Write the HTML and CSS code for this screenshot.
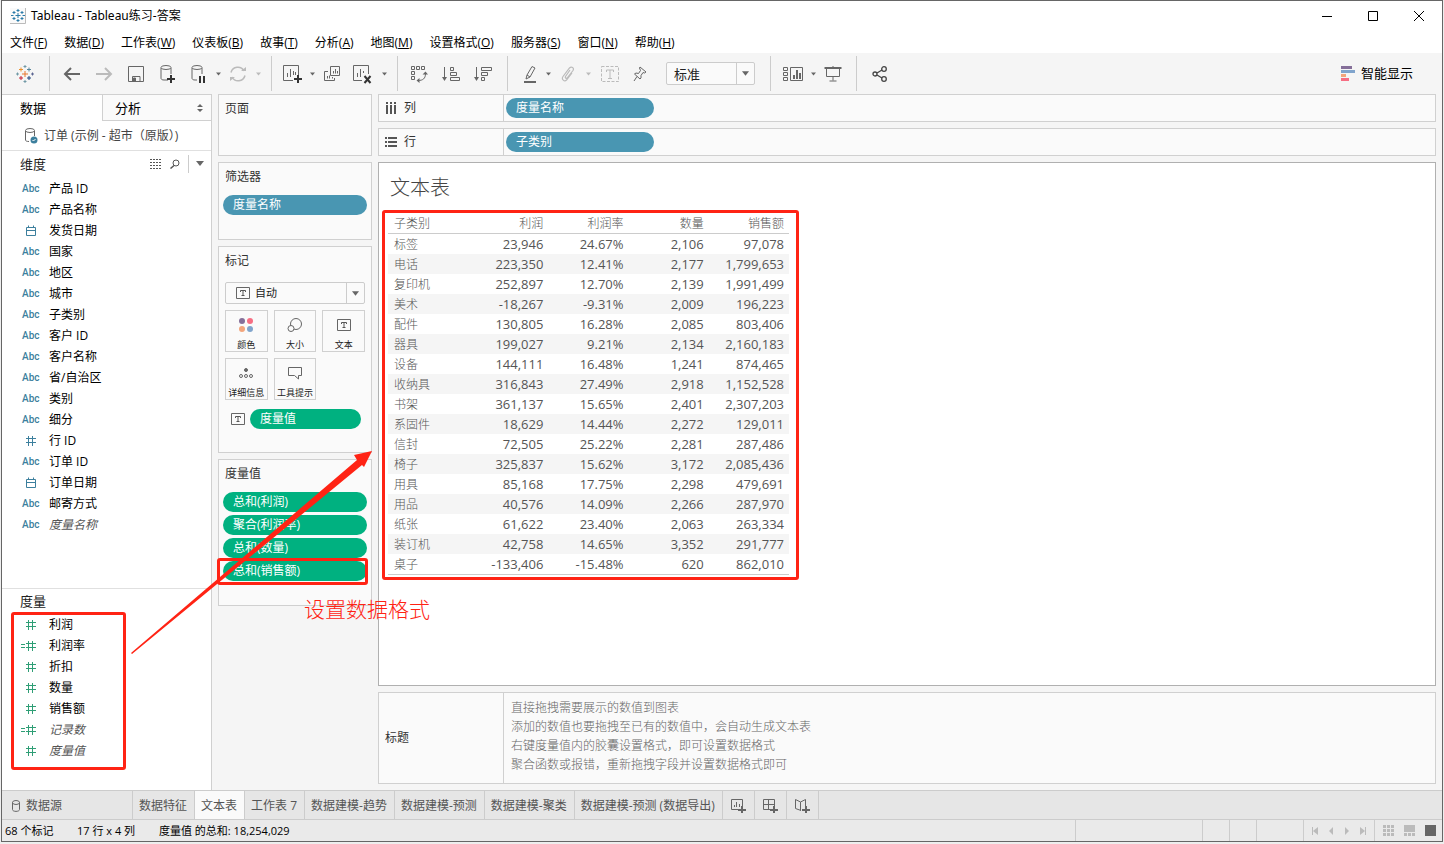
FILE: index.html
```html
<!DOCTYPE html>
<html lang="zh-CN">
<head>
<meta charset="utf-8">
<title>Tableau - Tableau练习-答案</title>
<link rel="stylesheet" href="styles.css">
</head>
<body>
<svg class="defs" aria-hidden="true">
  <symbol id="hash" viewBox="0 0 12 12"><path d="M3.500 1v10M7.500 1v10M1 3.500h10M1 7.500h10"/></symbol>
  <symbol id="eqhash" viewBox="0 0 16 12"><path d="M7.500 1v10M11.500 1v10M5 3.500h10M5 7.500h10M0 4.500h4M0 7.500h4"/></symbol>
  <symbol id="cal" viewBox="0 0 12 12"><path d="M1.500 2.500h9v8h-9zM1.500 5.500h9M3.500 .5v2M8.500 .5v2"/></symbol>
  <symbol id="caret" viewBox="0 0 8 5"><path d="M0 0h8L4 5z"/></symbol>
  <symbol id="tbox" viewBox="0 0 14 12"><path d="M.5.5h13v11H.5z" fill="none" stroke="#666"/><path d="M4.500 5V3.500h5V5M7 3.500v5.500M5.500 8.500h3" fill="none" stroke="#555"/></symbol>
</svg>
<div class="window">
  <header class="titlebar">
    <svg class="app-icon" width="16" height="16" viewBox="0 0 16 16"><path d="M0 0h15v15H0z" fill="#fafafa"/><path d="M15.500 0v15.500H0" fill="none" stroke="#bbb"/><path d="M5.500 7.500h5M8 5v5M8 1v3M6.500 2.500h3M8 11v3M6.500 12.500h3M2.500 4.500h3M4 3v3M10.500 4.500h3M12 3v3M2.500 10.500h3M4 9v3M10.500 10.500h3M12 9v3M1 7.500h2.500M12.500 7.500H15" fill="none" stroke="#2b7ba8"/></svg>
    <h1 class="app-title">Tableau - Tableau练习-答案</h1>
    <div class="win-controls">
      <button aria-label="最小化"><svg width="12" height="12"><path d="M1 6.500h10"/></svg></button>
      <button aria-label="最大化"><svg width="12" height="12"><path d="M1.500 1.500h9v9h-9z"/></svg></button>
      <button aria-label="关闭"><svg width="12" height="12"><path d="M1 1l10 10M11 1L1 11"/></svg></button>
    </div>
  </header>
  <nav class="menubar">
    <button>文件(<u>F</u>)</button><button>数据(<u>D</u>)</button><button>工作表(<u>W</u>)</button><button>仪表板(<u>B</u>)</button><button>故事(<u>T</u>)</button><button>分析(<u>A</u>)</button><button>地图(<u>M</u>)</button><button>设置格式(<u>O</u>)</button><button>服务器(<u>S</u>)</button><button>窗口(<u>N</u>)</button><button>帮助(<u>H</u>)</button>
  </nav>
  <div class="toolbar">
    <div class="group group-logo">
      <button class="w32" aria-label="开始页面"><svg width="18" height="18" viewBox="0 0 18 18"><path d="M9 6v6M6 9h6" stroke="#e8762c"/><path d="M5 2.500v4M3 4.500h4" stroke="#eb912c"/><path d="M13 2.500v4M11 4.500h4" stroke="#59879b"/><path d="M5 11v4M3 13h4" stroke="#c72035"/><path d="M13 11v4M11 13h4" stroke="#1f447e"/><path d="M9 0v3M7.500 1.500h3M9 15v3M7.500 16.500h3M1.500 7.500v3M0 9h3" stroke="#7199a6"/><path d="M16.500 7.500v3M15 9h3" stroke="#5b6591"/></svg></button>
    </div>
    <div class="group group-file">
      <button class="w32" aria-label="撤消"><svg width="18" height="16" viewBox="0 0 18 16"><path d="M17 8H2M8 2L2 8l6 6" stroke-width="2"/></svg></button>
      <button class="w32 off" aria-label="重做"><svg width="18" height="16" viewBox="0 0 18 16"><path d="M1 8h15M10 2l6 6-6 6" stroke-width="2"/></svg></button>
      <button class="w32" aria-label="保存"><svg width="18" height="18" viewBox="0 0 18 18"><path d="M1.500 1.500h15v15h-15z"/><path d="M5.500 16v-4.500h7.500V16"/><path d="M6.500 13h2v3h-2z" fill="#666"/></svg></button>
      <button class="w32" aria-label="新建数据源"><svg width="18" height="20" viewBox="0 0 18 20"><path d="M9 16H5c-2 0-3-.7-3-1.800V4M12 4v6"/><ellipse cx="7" cy="3.500" rx="5" ry="2"/><path d="M12 11v8M8 15h8" class="heavy"/></svg></button>
      <button class="w28" aria-label="暂停自动更新"><svg width="18" height="20" viewBox="0 0 18 20"><path d="M8 16H6c-2 0-3-.7-3-1.800V4M13 4v6"/><ellipse cx="8" cy="3.500" rx="5" ry="2"/><path d="M11 12v7M15 12v7" class="heavy"/></svg></button>
      <button class="w12" aria-label="自动更新选项"><svg class="caret"><use href="#caret"/></svg></button>
      <button class="w28 off" aria-label="运行更新"><svg width="18" height="18" viewBox="0 0 18 18"><path d="M2 7.500A7 7 0 0 1 15 6M16 10.500A7 7 0 0 1 3 12" stroke-width="1.500"/><path d="M12 6h5V2zM6 12H1v4z" fill="#bbb" stroke="none"/></svg></button>
      <button class="w12 off" aria-label="更新选项"><svg class="caret"><use href="#caret"/></svg></button>
    </div>
    <div class="group group-sheet">
      <button class="w28" aria-label="新建工作表"><svg width="20" height="20" viewBox="0 0 20 20"><path d="M11 16.500H1.500v-15h15V11"/><path d="M5.500 13V9M8.500 13V5M11.500 11V7M13.500 11V8"/><path d="M16 11v8M12 15h8" class="heavy"/></svg></button>
      <button class="w12" aria-label="新建选项"><svg class="caret"><use href="#caret"/></svg></button>
      <button class="w28" aria-label="复制工作表"><svg width="18" height="18" viewBox="0 0 18 18"><path d="M7.500 1.500h9v9h-9zM5 6.500H1.500v9h10V13M10.500 8.500V6M12.500 8.500V4M14.500 8.500V6M4.500 13.500V11M6.500 13.500v-3M9.500 13.500V12"/></svg></button>
      <button class="w32" aria-label="清除工作表"><svg width="20" height="20" viewBox="0 0 20 20"><path d="M10 16.500H1.500v-15h15V10"/><path d="M5.500 13V9M8.500 13V5M11.500 9V7"/><path d="M12.500 12l6 7M18.500 12l-6 7" class="heavy"/></svg></button>
      <button class="w12" aria-label="清除选项"><svg class="caret"><use href="#caret"/></svg></button>
    </div>
    <div class="group group-sort">
      <button class="w32" aria-label="交换行和列"><svg width="18" height="18" viewBox="0 0 18 18"><path d="M1.500 1.500h3v3h-3zM6.500 1.500h3v3h-3zM11.500 1.500h3v3h-3zM1.500 6.500h3v3h-3zM1.500 11.500h3v3h-3z"/><path d="M8 15.500c5 0 7.500-2 7.500-7"/><path d="M9.500 13l-3 2.500 3 2.500zM12.500 9.500h5.500L15.500 6.500z" fill="#666" stroke="none"/></svg></button>
      <button class="w32" aria-label="升序排序"><svg width="18" height="16" viewBox="0 0 18 16"><path d="M2.500 1v12M8.500 1.500h3v3h-3zM8.500 6.500h6v3h-6zM8.500 11.500h9v3h-9z"/><path d="M0 11h5l-2.500 4z" fill="#666" stroke="none"/></svg></button>
      <button class="w32" aria-label="降序排序"><svg width="18" height="16" viewBox="0 0 18 16"><path d="M2.500 1v12M7.500 1.500h10v3h-10zM7.500 6.500h6v3h-6zM7.500 11.500h3v3h-3z"/><path d="M0 11h5l-2.500 4z" fill="#666" stroke="none"/></svg></button>
    </div>
    <div class="group group-edit">
      <button class="w24" aria-label="突出显示"><svg width="14" height="18" viewBox="0 0 14 18"><path d="M4 10L9 1.500l3 1.500-5 9-4 2zM4 10l3 2"/><path d="M1 17h12" stroke-width="2"/></svg></button>
      <button class="w12" aria-label="突出显示选项"><svg class="caret"><use href="#caret"/></svg></button>
      <button class="w28 off" aria-label="分组"><svg width="14" height="16" viewBox="0 0 14 16"><path d="M9 4L4.500 10.500c-.8 1.500 1 2.500 2 1L12 4.500C13.500 2 10.500 0 8.500 2L2 10.500c-2 3 1.500 5.500 3.500 3.500L11 7" stroke-width="1.200"/></svg></button>
      <button class="w12 off" aria-label="分组选项"><svg class="caret"><use href="#caret"/></svg></button>
      <button class="w32 off" aria-label="显示标记标签"><svg width="18" height="16" viewBox="0 0 18 16"><path d="M.5.5h17v15H.5z" stroke-dasharray="3 1.500"/><path d="M5.500 6V4h7v2M9 4v8.500M7 12.500h4"/></svg></button>
      <button class="w28" aria-label="固定"><svg width="14" height="16" viewBox="0 0 14 16"><path d="M7 1l6 5-1.500 1-1.500-.5-2 3L8 12l-1 1-5.500-5L3 7l2.500.5 2-3L6.500 2zM4 10.500L1 15"/></svg></button>
      <label class="select-box fit"><select aria-label="适合"><option>标准</option></select><span class="select-arrow"><svg class="caret"><use href="#caret"/></svg></span></label>
    </div>
    <div class="group group-view">
      <button class="w28" aria-label="显示/隐藏卡"><svg width="20" height="16" viewBox="0 0 20 16"><path d="M.5 1.500h4v3h-4zM.5 6.500h4v3h-4zM.5 11.500h4v3h-4zM7.500 1.500h12v13h-12z"/><path d="M11 13V9M14 13V4M17 13V7" stroke-width="2"/></svg></button>
      <button class="w12" aria-label="卡选项"><svg class="caret"><use href="#caret"/></svg></button>
      <button class="w28" aria-label="演示模式"><svg width="18" height="16" viewBox="0 0 18 16"><path d="M.5 2h17" stroke-width="2"/><path d="M2.500 3v7.500h13V3M9 0v2M9 10.500v4M5.500 15h7"/></svg></button>
    </div>
    <div class="group group-share">
      <button class="w32" aria-label="共享"><svg width="16" height="16" viewBox="0 0 16 16"><g class="share"><circle cx="3" cy="8" r="2"/><circle cx="12" cy="3" r="2.300"/><circle cx="12" cy="13" r="2.300"/><path d="M5 7l5-3M5 9l5 3"/></g></svg></button>
    </div>
    <button class="showme"><svg width="14" height="15" viewBox="0 0 14 15"><g stroke="none"><path fill="#856f99" d="M0 0h11v3H0z"/><path fill="#80a4cc" d="M0 4h14v3H0z"/><path fill="#f3a57c" d="M0 8h5v3H0z"/><path fill="#f76e83" d="M0 12h8v3H0z"/></g></svg>智能显示</button>
  </div>

  <main class="workspace">
    <aside class="sidebar">
      <div class="side-tabs">
        <button class="side-tab active">数据</button>
        <button class="side-tab">分析<svg width="6" height="8" viewBox="0 0 6 8"><path d="M0 3l3-3 3 3zM0 5l3 3 3-3z" fill="#666"/></svg></button>
      </div>
      <div class="source"><svg width="14" height="16" viewBox="0 0 14 16"><path d="M5 13.500c-2.500 0-3.500-.7-3.500-1.500V3M10.500 3v5" fill="none" stroke="#666"/><ellipse cx="6" cy="2.500" rx="4.500" ry="2" fill="none" stroke="#666"/><circle cx="10" cy="12" r="3.500" fill="#3c7f9d"/><path d="M8.500 12l1 1 2-2" fill="none" stroke="#fff"/></svg>订单 (示例 - 超市（原版）)</div>
      <section class="dims">
        <div class="side-head"><h2>维度</h2>
          <button aria-label="查看数据"><svg width="12" height="10"><path d="M0 .5h12M0 3.500h12M0 6.500h12M0 9.500h12" fill="none" stroke="#555" stroke-dasharray="2 1"/></svg></button>
          <button aria-label="查找字段"><svg width="10" height="10" viewBox="0 0 10 10"><circle cx="6" cy="4" r="3" fill="none" stroke="#555"/><path d="M4 6.500L.5 9.500" stroke="#555" stroke-width="1.500"/></svg></button>
          <button class="head-menu" aria-label="字段菜单"><svg class="caret"><use href="#caret"/></svg></button>
        </div>
        <ul class="fields">
          <li><span class="abc">Abc</span>产品 ID</li>
          <li><span class="abc">Abc</span>产品名称</li>
          <li><svg class="fi"><use href="#cal"/></svg>发货日期</li>
          <li><span class="abc">Abc</span>国家</li>
          <li><span class="abc">Abc</span>地区</li>
          <li><span class="abc">Abc</span>城市</li>
          <li><span class="abc">Abc</span>子类别</li>
          <li><span class="abc">Abc</span>客户 ID</li>
          <li><span class="abc">Abc</span>客户名称</li>
          <li><span class="abc">Abc</span>省/自治区</li>
          <li><span class="abc">Abc</span>类别</li>
          <li><span class="abc">Abc</span>细分</li>
          <li><svg class="fi"><use href="#hash"/></svg>行 ID</li>
          <li><span class="abc">Abc</span>订单 ID</li>
          <li><svg class="fi"><use href="#cal"/></svg>订单日期</li>
          <li><span class="abc">Abc</span>邮寄方式</li>
          <li class="generated"><span class="abc">Abc</span>度量名称</li>
        </ul>
      </section>
      <section class="measures">
        <h2>度量</h2>
        <ul class="fields">
          <li><svg class="fi"><use href="#hash"/></svg>利润</li>
          <li><svg class="fi wide"><use href="#eqhash"/></svg>利润率</li>
          <li><svg class="fi"><use href="#hash"/></svg>折扣</li>
          <li><svg class="fi"><use href="#hash"/></svg>数量</li>
          <li><svg class="fi"><use href="#hash"/></svg>销售额</li>
          <li class="generated"><svg class="fi wide"><use href="#eqhash"/></svg>记录数</li>
          <li class="generated"><svg class="fi"><use href="#hash"/></svg>度量值</li>
        </ul>
      </section>
    </aside>

    <div class="cards">
      <section class="card pages"><h3>页面</h3></section>
      <section class="card filters"><h3>筛选器</h3><button class="pill blue">度量名称</button></section>
      <section class="card marks"><h3>标记</h3>
        <label class="select-box mark-type"><svg class="tbox"><use href="#tbox"/></svg><select aria-label="标记类型"><option>自动</option></select><span class="select-arrow"><svg class="caret"><use href="#caret"/></svg></span></label>
        <div class="mark-grid">
          <button><svg width="16" height="16"><circle cx="4" cy="4" r="3" fill="#856f99"/><circle cx="12" cy="4" r="3" fill="#f76e83"/><circle cx="4" cy="12" r="3" fill="#f3a57c"/><circle cx="12" cy="12" r="3" fill="#80a4cc"/></svg>颜色</button>
          <button><svg width="16" height="16" fill="none" stroke="#666"><circle cx="9" cy="7" r="5.500"/><circle cx="4" cy="11.500" r="3" fill="#fafafa"/></svg>大小</button>
          <button><svg class="tbox"><use href="#tbox"/></svg>文本</button>
          <button><svg width="16" height="16" fill="none" stroke="#666"><circle cx="8" cy="5" r="1.500" fill="#666"/><circle cx="3" cy="11" r="1.500"/><circle cx="8" cy="11" r="1.500"/><circle cx="13" cy="11" r="1.500"/></svg>详细信息</button>
          <button><svg width="16" height="16" fill="none" stroke="#666"><path d="M1.500 2.500h13v8h-3v3.500l-4-3.500h-6z"/></svg>工具提示</button>
        </div>
        <div class="mark-row"><svg class="tbox"><use href="#tbox"/></svg><button class="pill green">度量值</button></div>
      </section>
      <section class="card values"><h3>度量值</h3>
        <button class="pill green">总和(利润)</button>
        <button class="pill green">聚合(利润率)</button>
        <button class="pill green">总和(数量)</button>
        <button class="pill green">总和(销售额)</button>
      </section>
    </div>

    <div class="sheet">
      <section class="shelf"><h3><svg width="12" height="12"><path d="M2 0v2M6 0v2M10 0v2M2 3v9M6 3v9M10 3v9" stroke="#555" stroke-width="2"/></svg>列</h3><button class="pill blue">度量名称</button></section>
      <section class="shelf"><h3><svg width="12" height="12"><path d="M0 2h2M0 6h2M0 10h2M3 2h9M3 6h9M3 10h9" stroke="#555" stroke-width="2"/></svg>行</h3><button class="pill blue">子类别</button></section>
      <section class="viz">
        <h2>文本表</h2>
        <table>
          <thead><tr><th>子类别</th><th>利润</th><th>利润率</th><th>数量</th><th>销售额</th></tr></thead>
          <tbody>
            <tr><th>标签</th><td>23,946</td><td>24.67%</td><td>2,106</td><td>97,078</td></tr>
            <tr><th>电话</th><td>223,350</td><td>12.41%</td><td>2,177</td><td>1,799,653</td></tr>
            <tr><th>复印机</th><td>252,897</td><td>12.70%</td><td>2,139</td><td>1,991,499</td></tr>
            <tr><th>美术</th><td>-18,267</td><td>-9.31%</td><td>2,009</td><td>196,223</td></tr>
            <tr><th>配件</th><td>130,805</td><td>16.28%</td><td>2,085</td><td>803,406</td></tr>
            <tr><th>器具</th><td>199,027</td><td>9.21%</td><td>2,134</td><td>2,160,183</td></tr>
            <tr><th>设备</th><td>144,111</td><td>16.48%</td><td>1,241</td><td>874,465</td></tr>
            <tr><th>收纳具</th><td>316,843</td><td>27.49%</td><td>2,918</td><td>1,152,528</td></tr>
            <tr><th>书架</th><td>361,137</td><td>15.65%</td><td>2,401</td><td>2,307,203</td></tr>
            <tr><th>系固件</th><td>18,629</td><td>14.44%</td><td>2,272</td><td>129,011</td></tr>
            <tr><th>信封</th><td>72,505</td><td>25.22%</td><td>2,281</td><td>287,486</td></tr>
            <tr><th>椅子</th><td>325,837</td><td>15.62%</td><td>3,172</td><td>2,085,436</td></tr>
            <tr><th>用具</th><td>85,168</td><td>17.75%</td><td>2,298</td><td>479,691</td></tr>
            <tr><th>用品</th><td>40,576</td><td>14.09%</td><td>2,266</td><td>287,970</td></tr>
            <tr><th>纸张</th><td>61,622</td><td>23.40%</td><td>2,063</td><td>263,334</td></tr>
            <tr><th>装订机</th><td>42,758</td><td>14.65%</td><td>3,352</td><td>291,777</td></tr>
            <tr><th>桌子</th><td>-133,406</td><td>-15.48%</td><td>620</td><td>862,010</td></tr>
          </tbody>
        </table>
      </section>
      <section class="caption"><h3>标题</h3>
        <p>直接拖拽需要展示的数值到图表<br>添加的数值也要拖拽至已有的数值中，会自动生成文本表<br>右键度量值内的胶囊设置格式，即可设置数据格式<br>聚合函数或报错，重新拖拽字段并设置数据格式即可</p>
      </section>
    </div>
  </main>

  <nav class="tabs">
    <button class="tab-source"><svg width="8" height="12" viewBox="0 0 8 12" fill="none" stroke="#666"><ellipse cx="4" cy="2.500" rx="3.500" ry="2"/><path d="M.5 2.500v7c0 2.500 7 2.500 7 0v-7"/></svg>数据源</button>
    <button>数据特征</button><button class="active">文本表</button><button>工作表 7</button><button>数据建模-趋势</button><button>数据建模-预测</button><button>数据建模-聚类</button><button>数据建模-预测 (数据导出)</button>
    <button class="tab-new" aria-label="新建工作表"><svg width="16" height="16" viewBox="0 0 16 16"><path d="M8 11.500H1.500v-10h11V8M4.500 9V7M6.500 9V4M9.500 9V6"/><path d="M12 8v7M8 12h8" stroke-width="2"/></svg></button>
    <button class="tab-new" aria-label="新建仪表板"><svg width="16" height="16" viewBox="0 0 16 16"><path d="M8 11.500H1.500v-10h11V8M1.500 6.500h11M6.500 1.500v10"/><path d="M12 8v7M8 12h8" stroke-width="2"/></svg></button>
    <button class="tab-new" aria-label="新建故事"><svg width="16" height="16" viewBox="0 0 16 16"><path d="M7 12.500L1.500 10.500V1.500l5 2.500v8.500M6.500 4l5-2.500V8"/><path d="M12 8v7M8 12h8" stroke-width="2"/></svg></button>
  </nav>
  <footer class="status">
    <span class="count">68 个标记</span><span class="size">17 行 x 4 列</span><span>度量值 的总和: 18,254,029</span>
    <div class="cells">
      <i class="c127"></i><i class="c27"></i><i class="c27"></i><i class="c47"></i>
      <div class="nav-cell">
        <button aria-label="第一张"><svg width="8" height="8"><path d="M1.500 0v8" stroke="#bbb"/><path d="M7 0v8L2 4z"/></svg></button>
        <button aria-label="上一张"><svg width="8" height="8"><path d="M6 0v8L2 4z"/></svg></button>
        <button aria-label="下一张"><svg width="8" height="8"><path d="M2 0v8l4-4z"/></svg></button>
        <button aria-label="最后一张"><svg width="8" height="8"><path d="M6.500 0v8" stroke="#bbb"/><path d="M1 0v8l5-4z"/></svg></button>
      </div>
      <div class="mode-cell">
        <button aria-label="显示工作表排序程序"><svg width="11" height="11"><path d="M0 0h3v3H0zM4 0h3v3H4zM8 0h3v3H8zM0 4h3v3H0zM4 4h3v3H4zM8 4h3v3H8zM0 8h3v3H0zM4 8h3v3H4zM8 8h3v3H8z"/></svg></button>
        <button aria-label="显示缩略图"><svg width="11" height="11"><path d="M0 0h11v7H0zM0 8h3v3H0zM4 8h3v3H4zM8 8h3v3H8z"/></svg></button>
        <button aria-label="显示标签"><svg width="11" height="11"><path d="M0 0h11v11H0z" fill="#666"/></svg></button>
      </div>
    </div>
  </footer>

  <div class="note note-measures"></div>
  <div class="note note-pill"></div>
  <div class="note note-table"></div>
  <svg class="note-arrow" width="242" height="204" viewBox="0 0 242 204"><path d="M0 202L226 9 223 4 241 0 233 16 231 14 1 203z" fill="#ff2314"/></svg>
  <p class="note-text">设置数据格式</p>
</div>
</body>
</html>
```
FILE: styles.css
```css
* { box-sizing: border-box; }

body {
  margin: 0;
  padding: 0 1px 2px;
  background: #eee;
  color: #222;
  font: 12px/20px "Open Sans", "Noto Sans CJK SC", sans-serif;
}

h1, h2, h3, p, ul { margin: 0; padding: 0; font-size: 12px; font-weight: 400; }
ul { list-style: none; }
button, select {
  margin: 0;
  padding: 0;
  border: 0;
  border-radius: 0;
  background: none;
  color: inherit;
  font: inherit;
}
svg { display: block; flex: none; }
.defs { position: absolute; width: 0; height: 0; }
.caret { width: 8px; height: 5px; fill: #666; }
.tbox { width: 14px; height: 12px; }

.window {
  position: relative;
  display: flex;
  flex-direction: column;
  min-height: calc(100vh - 2px);
  border: 1px solid #666;
  background: #f5f5f5;
}

/* Title and menus */
.titlebar { display: flex; align-items: center; height: 30px; padding-left: 8px; background: #fff; }
.app-icon { margin-right: 5px; }
.app-title { color: #000; font-family: "Noto Sans", "Noto Sans CJK SC", sans-serif; }
.win-controls { display: flex; margin-left: auto; }
.win-controls button { display: grid; place-items: center; width: 46px; height: 28px; }
.win-controls svg { fill: none; stroke: #000; }
.menubar { display: flex; gap: 17px; height: 22px; padding: 1px 0 0 8px; background: #fff; color: #000; }

/* Toolbar */
.toolbar { display: flex; height: 41px; padding: 3px 29px 3px 0; }
.group { display: flex; align-items: center; border-right: 1px solid #ccc; }
.group button, .showme { display: flex; align-items: center; justify-content: center; height: 32px; }
.group svg { fill: none; stroke: #666; }
.group .caret { width: 5px; height: 4px; fill: #666; stroke: none; }
.group .off svg { stroke: #bbb; }
.group .off .caret { fill: #bbb; stroke: none; }
.group .heavy { stroke: #333; stroke-width: 2; }
.group .share { stroke: #444; stroke-width: 1.3; }
.group-logo { padding: 0 8px 0 7px; }
.group-file { padding: 0 7px 0 6px; }
.group-sheet { padding: 0 7px 0 6px; }
.group-sort { padding: 0 8px 0 5px; }
.group-edit { padding: 0 15px 0 10px; }
.group-view { padding: 0 9px 0 8px; }
.group-share { padding-left: 7px; border: 0; }
.w12 { width: 12px; }
.w24 { width: 24px; }
.w28 { width: 28px; }
.w32 { width: 32px; }
.showme { gap: 6px; margin-left: auto; padding-top: 2px; font-size: 13px; color: #000; }

.select-box { display: flex; align-items: center; border: 1px solid #ccc; border-radius: 2px; background: #fafafa; }
.select-box select { flex: 1; align-self: stretch; min-width: 0; appearance: none; outline: 0; }
.select-arrow { display: grid; place-items: center; align-self: stretch; width: 18px; border-left: 1px solid #ccc; }
.group .select-arrow .caret { width: 7px; height: 5px; }
.mark-type .caret { width: 7px; }
.fit { width: 89px; height: 23px; margin-left: 12px; padding-left: 7px; font-size: 13px; }

/* Workspace */
.workspace { display: flex; flex: 1; }
.sidebar { display: flex; flex-direction: column; width: 210px; border: solid #d0d0d0; border-width: 1px 1px 0 0; background: #fff; }
.side-tabs { display: flex; color: #000; font-size: 13px; }
.side-tab { display: flex; align-items: center; justify-content: space-between; flex: 1; height: 26px; padding: 0 8px 0 12px; border: solid #d0d0d0; border-width: 0 0 1px 1px; background: #fafafa; }
.side-tab.active { flex: 0 0 100px; padding-left: 18px; border: 0; background: #fff; }
.source { display: flex; align-items: center; gap: 6px; height: 30px; padding-left: 22px; border-bottom: 1px solid #e0e0e0; color: #444; white-space: nowrap; }
.dims { flex: 1; }
.side-head { display: flex; align-items: center; height: 27px; padding: 0 1px 2px 18px; gap: 8px; }
.side-head h2, .measures h2 { color: #222; font-size: 13px; line-height: 24px; }
.side-head h2 { margin-right: auto; }
.head-menu { display: grid; place-items: center; width: 22px; height: 18px; border-left: 1px solid #ccc; }
.fields li { display: flex; align-items: center; height: 21px; padding-left: 20px; color: #000; }
.fields .generated { color: #555; font-style: italic; }
.abc { width: 27px; color: #3c7f9d; font: 500 10px/21px Roboto, sans-serif; }
.fi { width: 12px; height: 12px; margin: 0 12px 0 3px; fill: none; stroke: #3c7f9d; }
.fi.wide { width: 16px; margin-left: -1px; }
.measures { min-height: 202px; border-top: 1px solid #e0e0e0; }
.measures h2 { height: 25px; padding-left: 18px; }
.measures .fi { stroke: #2e9e75; }

.cards { display: flex; flex-direction: column; gap: 6px; width: 160px; padding-left: 6px; }
.card { border: 1px solid #d0d0d0; background: #fafafa; }
.card h3 { padding: 4px 6px 0; color: #333; }
.pages { height: 62px; }
.filters { height: 78px; padding: 0 4px; }
.filters h3, .values h3 { padding-left: 2px; }
.marks { height: 207px; }
.values { display: flex; flex-direction: column; gap: 3px; height: 147px; padding: 0 4px; }
.values h3 { margin-bottom: 5px; }
.pill { display: block; height: 20px; padding: 0 10px 1px; border-radius: 10px; color: #fff; line-height: 19px; text-align: left; }
.filters .pill { width: 100%; margin-top: 8px; }
.blue { background: #4996b2; }
.green { background: #00b180; }
.mark-type { height: 22px; margin: 11px 6px 6px; padding-left: 10px; gap: 5px; font-size: 11px; }
.mark-grid { display: grid; grid-template-columns: repeat(3, 1fr); gap: 6px; padding: 0 6px; }
.mark-grid button { display: flex; flex-direction: column; align-items: center; justify-content: space-between; height: 42px; padding-top: 6px; border: 1px solid #d0d0d0; color: #222; font-size: 9px; line-height: 13px; white-space: nowrap; }
.mark-grid .tbox { margin-top: 2px; }
.mark-row { display: flex; align-items: center; gap: 5px; padding: 9px 10px 0 12px; }
.mark-row .pill { flex: 1; }

.sheet { display: flex; flex: 1; flex-direction: column; gap: 6px; min-width: 0; padding: 0 6px 6px; }
.shelf, .caption { display: flex; border: 1px solid #d0d0d0; background: #fafafa; }
.shelf { align-items: center; height: 28px; }
.shelf h3 { display: flex; align-items: center; align-self: stretch; gap: 7px; width: 125px; margin-right: 2px; padding-left: 6px; border-right: 1px solid #d0d0d0; color: #333; }
.shelf .pill { width: 148px; }
.viz { flex: 1; padding: 9px; border: 1px solid #b0b0b0; background: #fff; }
.viz h2 { padding-left: 2px; color: #444; font-size: 20px; font-weight: 300; line-height: 32px; }
.viz table { width: 401px; margin-top: 9px; border-collapse: collapse; border-bottom: 1px solid #ccc; table-layout: fixed; }
.viz th, .viz td { height: 20px; padding: 0 5px; line-height: 18px; text-align: right; }
.viz th { padding-top: 2px; color: #555; font-weight: 300; }
.viz th:first-child { padding-left: 6px; text-align: left; }
.viz td { color: #555; font-size: 13px; }
.viz thead tr { border-bottom: 1px solid #ccc; }
.viz tbody tr:nth-child(even) { background: #f5f5f5; }
.caption { min-height: 92px; }
.caption h3 { display: flex; align-items: center; width: 125px; padding-left: 6px; border-right: 1px solid #d0d0d0; color: #333; }
.caption p { padding: 5px 7px; color: #666; font-weight: 300; line-height: 19px; }

/* Sheet tabs and status */
.tabs { display: flex; height: 30px; border: solid #ccc; border-width: 1px 0; background: #e6e6e6; color: #555; }
.tabs button { padding: 2px 7px 0 6px; border-right: 1px solid #ccc; white-space: nowrap; }
.tabs .tab-source { display: flex; align-items: center; gap: 6px; width: 131px; padding-left: 10px; }
.tabs .active { background: #fafafa; }
.tabs .tab-new { display: grid; place-items: center; width: 32px; padding: 2px 0 0; }
.tab-new svg { fill: none; stroke: #666; }
.status { display: flex; height: 21px; padding-left: 3px; background: #eaeaea; color: #000; font-size: 11px; line-height: 22px; }
.count { width: 72px; }
.size { width: 82px; }
.cells { display: flex; margin-left: auto; }
.cells > * { border-left: 1px solid #ccc; }
.c127 { width: 127px; }
.c27 { width: 27px; }
.c47 { width: 47px; }
.nav-cell, .mode-cell { display: flex; align-items: center; fill: #bbb; }
.nav-cell { gap: 8px; width: 71px; padding-left: 7px; }
.mode-cell { gap: 10px; width: 68px; padding-left: 8px; }

/* Callouts drawn over the workspace */
.note { position: absolute; border: 3px solid #ff2314; border-radius: 3px; }
.note-measures { left: 9px; top: 611px; width: 115px; height: 158px; }
.note-pill { left: 215px; top: 557px; width: 151px; height: 27px; }
.note-table { left: 380px; top: 209px; width: 417px; height: 370px; }
.note-arrow { position: absolute; left: 129px; top: 450px; }
.note-text { position: absolute; left: 302px; top: 593px; color: #ff2314; font-size: 21px; font-weight: 300; line-height: 30px; }
```
